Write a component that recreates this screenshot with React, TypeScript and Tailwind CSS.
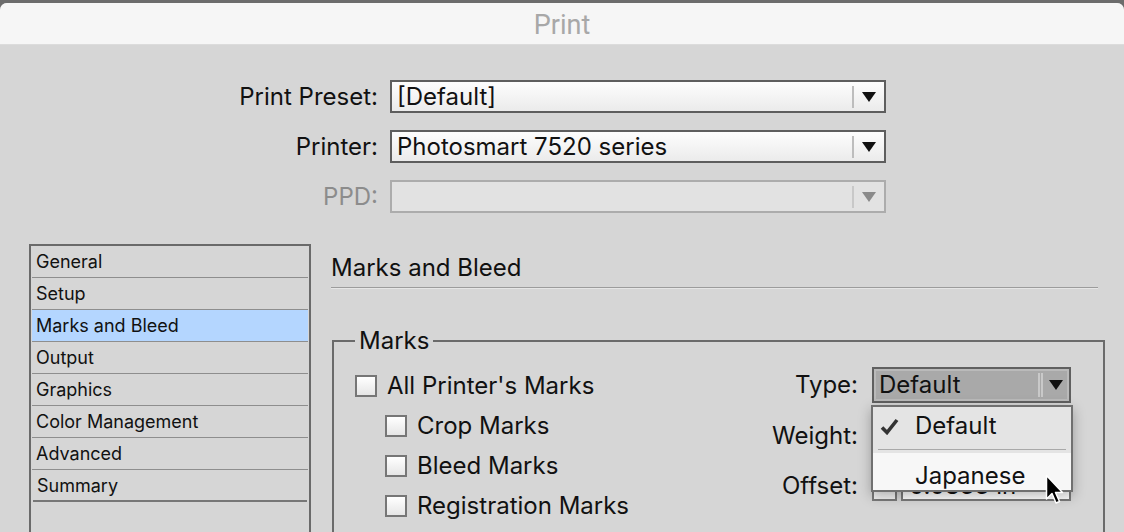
import React from 'react';

const font = "font-['Inter','Liberation_Sans',sans-serif]";

function Arrow({ color = '#111' }: { color?: string }) {
  return (
    <svg width="14" height="10" viewBox="0 0 14 10">
      <path d="M0 0 H14 L7 10 Z" fill={color} />
    </svg>
  );
}

function Select({ value, disabled }: { value?: string; disabled?: boolean }) {
  return (
    <div
      className={
        'h-[33px] border-2 flex items-center ' +
        (disabled
          ? 'border-[#acacac] bg-[#e2e2e2]'
          : 'border-[#5e5e5e] bg-linear-to-b from-[#fdfdfd] to-[#ebebeb]')
      }
    >
      <span className="flex-1 pl-[5px] text-[24px] leading-none text-[#111] whitespace-nowrap">{value}</span>
      <div className={'w-[2px] h-[22px] ' + (disabled ? 'bg-[#c8c8c8]' : 'bg-[#bdbdbd]')} />
      <div className="w-[30px] flex justify-center">
        <Arrow color={disabled ? '#8a8a8a' : '#111'} />
      </div>
    </div>
  );
}

function Checkbox({ label, indent }: { label: string; indent?: boolean }) {
  return (
    <div className={'h-[40px] flex items-center gap-[10px] ' + (indent ? 'pl-[30px]' : '')}>
      <div className="w-[22px] h-[22px] border-2 border-[#767676] bg-linear-to-b from-white to-[#e6e6e6]" />
      <span className="text-[24px] leading-[28px] text-[#111] whitespace-nowrap">{label}</span>
    </div>
  );
}

function Stepper({ value, height }: { value: string; height: string }) {
  return (
    <div className={'flex gap-[4px] ' + height}>
      <div className="w-[25px] border-2 border-[#7a7a7a] bg-[#f2f2f2] flex flex-col items-center justify-center gap-[2px]">
        <svg width="8" height="5" viewBox="0 0 8 5"><path d="M0 5 L4 0 L8 5Z" fill="#333" /></svg>
        <svg width="8" height="5" viewBox="0 0 8 5"><path d="M0 0 L4 5 L8 0Z" fill="#333" /></svg>
      </div>
      <div className="flex-1 border-2 border-[#7a7a7a] bg-white flex items-center pl-[6px] text-[24px] leading-none text-[#111] whitespace-nowrap">
        {value}
      </div>
    </div>
  );
}

const sections = ['General', 'Setup', 'Marks and Bleed', 'Output', 'Graphics', 'Color Management', 'Advanced', 'Summary'];

export default function App() {
  return (
    <div className={'w-[1124px] h-[532px] overflow-hidden bg-[#6c6c6c] pt-[3px] ' + font}>
      <div className="h-full rounded-t-[7px] bg-[#d6d6d6] overflow-hidden">
        {/* Title bar */}
        <div className="h-[42px] bg-[#f6f6f6] border-b border-[#dcdcdc] flex items-center justify-center pt-[4px]">
          <span className="font-['Roboto',sans-serif] text-[27px] text-[#a8a8a8] leading-none">Print</span>
        </div>

        {/* Preset / printer */}
        <div className="pt-[35px] grid grid-cols-[378px_496px] gap-x-[12px] gap-y-[17px] items-center">
          <span className="text-right text-[24px] leading-[33px] text-[#111]">Print Preset:</span>
          <Select value="[Default]" />
          <span className="text-right text-[24px] leading-[33px] text-[#111]">Printer:</span>
          <Select value="Photosmart 7520 series" />
          <span className="text-right text-[24px] leading-[33px] text-[#8c8c8c]">PPD:</span>
          <Select disabled />
        </div>

        <div className="mt-[31px] flex pl-[29px]">
          {/* Section list */}
          <div className="w-[282px] h-[300px] border-2 border-[#6a6a6a] shrink-0">
            {sections.map((s, i) => (
              <div
                key={s}
                className={
                  'h-[32px] flex items-center pl-[4px] text-[18px] text-[#111] ' +
                  (i === sections.length - 1
                    ? 'mx-[2px] border-b-2 border-[#777]'
                    : 'mx-[1px] border-b border-[#8e8e8e]') +
                  (s === 'Marks and Bleed' ? ' bg-[#b4d6ff]' : '')
                }
              >
                {s}
              </div>
            ))}
          </div>

          {/* Right panel */}
          <div className="ml-[20px] w-[774px] pt-[10px]">
            <div className="h-[34px] mr-[7px] border-b border-[#9c9c9c] shadow-[0_1px_0_#e6e6e6] text-[24px] leading-[28px] text-[#111]">
              Marks and Bleed
            </div>

            <fieldset className="mt-[39px] ml-[1px] h-[260px] border-2 border-[#6b6b6b]">
              <legend className="ml-[21px] px-[4px] text-[24px] leading-[28px] text-[#111]">Marks</legend>
              <div className="flex justify-between items-start pr-[32px]">
                <div className="pl-[21px] pt-[11px]">
                  <Checkbox label="All Printer's Marks" />
                  <Checkbox label="Crop Marks" indent />
                  <Checkbox label="Bleed Marks" indent />
                  <Checkbox label="Registration Marks" indent />
                </div>

                <div className="pt-[12px] grid grid-cols-[auto_199px] gap-x-[14px] items-center content-start">
                  <span className="text-right text-[24px] leading-[28px] text-[#111]">Type:</span>
                  <div className="relative">
                    <div className="h-[36px] border-2 border-[#606060] bg-[#a9a9a9] shadow-[inset_0_0_0_2px_#bababa] flex items-center">
                      <span className="flex-1 pl-[5px] text-[24px] text-[#111] leading-none">Default</span>
                      <div className="w-[5px] h-[24px] border-x-2 border-[#c9c9c9]" />
                      <div className="w-[26px] flex justify-center">
                        <Arrow />
                      </div>
                    </div>

                    {/* Popup menu */}
                    <div className="absolute z-10 left-[-1px] top-[38px] w-[202px] h-[87px] border-2 border-[#707070] bg-[#e4e4e4] shadow-[0_4px_12px_rgba(0,0,0,0.28)]">
                      <div className="h-[42px] flex items-center pb-[4px]">
                        <svg className="ml-[7px]" width="19" height="17" viewBox="0 0 19 17">
                          <path d="M2 9.5 L7 14.5 L17 2" fill="none" stroke="#333" strokeWidth="3.6" strokeLinejoin="miter" />
                        </svg>
                        <span className="ml-[16px] text-[24px] leading-[28px] text-[#111]">Default</span>
                      </div>
                      <div className="mx-[5px] h-px bg-[#a9a9a9]" />
                      <div className="mt-[3px] h-[37px] bg-[#f7f7f7] flex items-center pt-[8px] pl-[42px] text-[24px] leading-[28px] text-[#111]">
                        Japanese
                      </div>
                      {/* Cursor */}
                      <svg className="absolute left-[172px] top-[67px]" width="20" height="32" viewBox="0 0 20 32">
                        <path
                          d="M1.5 1.5 L1.5 25 L7 19.5 L11 29 L14.5 27.5 L10.5 18.5 L17.5 18.5 Z"
                          fill="#000"
                          stroke="#fff"
                          strokeWidth="1.5"
                          strokeLinejoin="round"
                        />
                      </svg>
                    </div>
                  </div>

                  <span className="mt-[16px] text-right text-[24px] leading-[34px] text-[#111]">Weight:</span>
                  <div className="mt-[16px]">
                    <Stepper value="0.25 pt" height="h-[34px]" />
                  </div>

                  <span className="mt-[18px] text-right text-[24px] leading-[30px] text-[#111]">Offset:</span>
                  <div className="mt-[18px]">
                    <Stepper value="0.0833 in" height="h-[30px]" />
                  </div>
                </div>
              </div>
            </fieldset>
          </div>
        </div>
      </div>
    </div>
  );
}
